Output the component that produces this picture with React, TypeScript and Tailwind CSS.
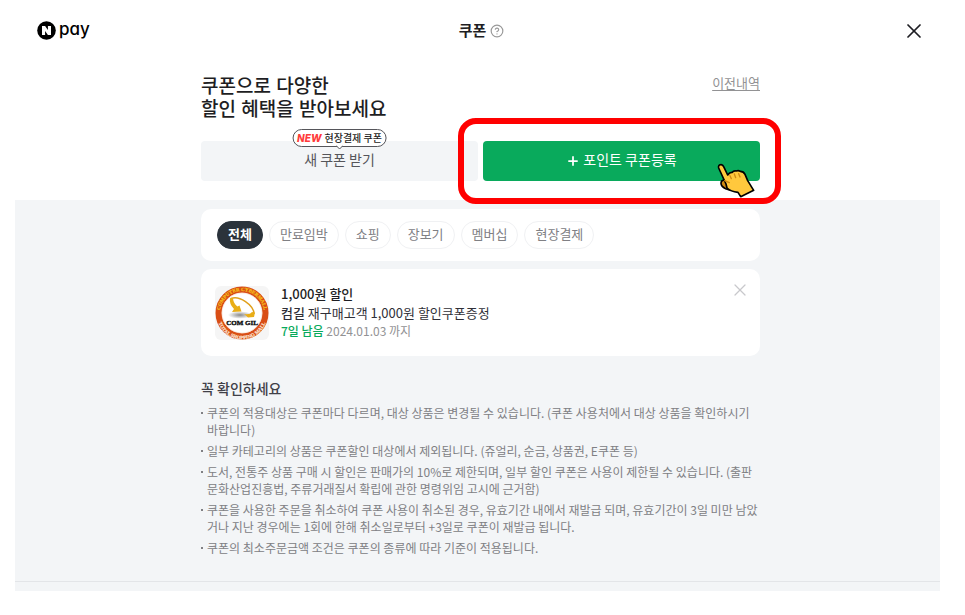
import { CircleHelp, Plus, X } from 'lucide-react';

const filters = ['전체', '만료임박', '쇼핑', '장보기', '멤버십', '현장결제'];

const notices = [
  '쿠폰의 적용대상은 쿠폰마다 다르며, 대상 상품은 변경될 수 있습니다. (쿠폰 사용처에서 대상 상품을 확인하시기 바랍니다)',
  '일부 카테고리의 상품은 쿠폰할인 대상에서 제외됩니다. (쥬얼리, 순금, 상품권, E쿠폰 등)',
  '도서, 전통주 상품 구매 시 할인은 판매가의 10%로 제한되며, 일부 할인 쿠폰은 사용이 제한될 수 있습니다. (출판문화산업진흥법, 주류거래질서 확립에 관한 명령위임 고시에 근거함)',
  '쿠폰을 사용한 주문을 취소하여 쿠폰 사용이 취소된 경우, 유효기간 내에서 재발급 되며, 유효기간이 3일 미만 남았거나 지난 경우에는 1회에 한해 취소일로부터 +3일로 쿠폰이 재발급 됩니다.',
  '쿠폰의 최소주문금액 조건은 쿠폰의 종류에 따라 기준이 적용됩니다.',
];

function PayLogo() {
  return (
    <a href="#" aria-label="N pay" className="flex items-center gap-[3px] text-black">
      <svg width="19" height="19" viewBox="0 0 19 19">
        <circle cx="9.5" cy="9.5" r="9.3" fill="#000" />
        <path d="M5 5h3.1l2.8 4.1V5H14v9h-3.1L8.1 9.9V14H5z" fill="#fff" />
      </svg>
      <span className="pb-[3px] font-[Inter,sans-serif] text-[17px] leading-5 font-medium [font-feature-settings:'cv11']">pay</span>
    </a>
  );
}

function ShopEmblem() {
  return (
    <svg className="size-[54px] shrink-0 rounded-md bg-[#f5f5f5]" viewBox="0 0 54 54" role="img" aria-label="COM GIL">
      <defs>
        <path id="ring-top" d="M5 27a22 22 0 0 1 44 0" />
        <path id="ring-bottom" d="M1.8 28a25.2 25.2 0 0 0 50.4 0" />
        <radialGradient id="shade">
          <stop offset="0" stopColor="#8a8a8a" />
          <stop offset="1" stopColor="#fff" />
        </radialGradient>
      </defs>
      <circle cx="27" cy="27" r="23.4" fill="#fff" stroke="#d94e16" strokeWidth="6.2" />
      <circle cx="27" cy="27" r="20" fill="none" stroke="#f6d9c8" strokeWidth="0.6" />
      <ellipse cx="25" cy="29" rx="12" ry="3.8" fill="url(#shade)" />
      <path d="M16 12.500C24 9 39 19 39 28" fill="none" stroke="#e0a01c" strokeWidth="1.5" />
      <path d="M15 12q-1 6 4 11l-2 3 9.500-.5-2-6-2 1q-4-3-4.500-8z" fill="#e9ae17" />
      <path d="M29 28q6 1 8-2l3 .5-1 4.500-6 .5z" fill="#e9ae17" />
      <text x="27" y="39" textAnchor="middle" className="font-['Liberation_Serif',serif] text-[7px] font-bold" fill="#111" stroke="#111" strokeWidth="0.4">COM GIL</text>
      <text className="font-['Liberation_Serif',serif] text-[5px] font-bold" fill="#f6c21c" stroke="#f6c21c" strokeWidth="0.2">
        <textPath href="#ring-top" startOffset="50%" textAnchor="middle">COMPUTER CYBERMALL</textPath>
      </text>
      <text className="font-['Liberation_Serif',serif] text-[5px] font-bold" fill="#fbe3d3" stroke="#fbe3d3" strokeWidth="0.2">
        <textPath href="#ring-bottom" startOffset="50%" textAnchor="middle">TOTAL SHOPPING MALL</textPath>
      </text>
    </svg>
  );
}

function PointingHand() {
  return (
    <svg className="absolute top-[21px] right-1 h-9 w-10" viewBox="50 62 120 108" aria-hidden="true">
      <g stroke="#000" strokeWidth="5" strokeLinejoin="round" strokeLinecap="round">
        <path d="M76 116q-11 0-11 10t14 16l14 5 8-17z" fill="#cf8a12" />
        <path d="M58 80q-2-9 6-10 6-1 9 6l12 25q6-9 14-8 4-6 12-4 6-3 12 1 10 0 14 9l8 19 18 29-39 19-8-13q-22-2-33-13l-3-12z" fill="#ffc83d" />
      </g>
      <path d="M76 118l14 6M92 103l4 9M105 98l4 11M118 97l4 10" fill="none" stroke="#cf8a12" strokeWidth="4" strokeLinecap="round" />
    </svg>
  );
}

export default function App() {
  return (
    <div className="min-h-screen bg-white pr-[25px] pb-6 pl-[15px] font-['Noto_Sans_CJK_KR',sans-serif] text-[#1e1e23]">
      <header className="grid h-[61px] grid-cols-[1fr_auto_1fr] items-center pr-3.5 pl-[22px]">
        <PayLogo />
        <div className="flex items-center gap-1">
          <h1 className="pb-0.5 text-[15px] leading-5 font-bold">쿠폰</h1>
          <button type="button" aria-label="도움말" className="text-[#999]">
            <CircleHelp size={14} strokeWidth={2} />
          </button>
        </div>
        <button type="button" aria-label="닫기" className="justify-self-end">
          <X size={24} strokeWidth={1.75} />
        </button>
      </header>

      <section className="pb-[19px] pl-[6px]">
        <div className="mx-auto max-w-[559px]">
          <div className="flex items-start justify-between pt-3.5">
            <h2 className="font-['Liberation_Sans','Noto_Sans_CJK_KR',sans-serif] text-[19px] leading-[23px] font-medium">
              쿠폰으로 다양한
              <br />
              할인 혜택을 받아보세요
            </h2>
            <a href="#" className="text-[13px] leading-4 text-[#929294] underline underline-offset-2">이전내역</a>
          </div>
          <div className="mt-5 grid grid-cols-2 gap-[5px] text-sm leading-5">
            <div className="relative">
              <button type="button" className="h-10 w-full rounded bg-[#f3f5f7] pb-1 text-[#55555a]">새 쿠폰 받기</button>
              <span className="absolute -top-3 left-1/2 flex h-[18px] -translate-x-1/2 items-center gap-[3px] rounded-full border border-[#55555a] bg-white px-1 pb-px text-[10px] leading-4 font-medium whitespace-nowrap">
                <em className="font-[Inter,sans-serif] font-extrabold text-[#ff3b3b]">NEW</em>
                현장결제 쿠폰
                <svg className="absolute top-full left-1/2 -mt-px -translate-x-1/2" width="7" height="5" viewBox="0 0 7 5">
                  <path d="M0 .5L3.500 4 7 .5" fill="#fff" stroke="#55555a" />
                  <path d="M1 0h5" stroke="#fff" />
                </svg>
              </span>
            </div>
            <div className="relative">
              <button type="button" className="flex h-10 w-full items-center justify-center gap-[3px] rounded bg-[#09aa5c] text-white">
                <Plus size={14} strokeWidth={3} />
                <span className="pb-1">포인트 쿠폰등록</span>
              </button>
              <div className="pointer-events-none absolute -top-[23px] -right-[21px] -bottom-[23px] -left-[25px] rounded-[18px] border-6 border-[#ff0000]" />
              <PointingHand />
            </div>
          </div>
        </div>
      </section>

      <main className="bg-[#f3f5f7] pt-[9px]">
        <div className="pl-[6px]">
          <div className="mx-auto max-w-[559px]">
            <div className="flex gap-1.5 rounded-[10px] bg-white px-4 py-3">
              {filters.map((name, i) => (
                <button
                  key={name}
                  type="button"
                  className={
                    i === 0
                      ? 'h-7 rounded-full border border-[#2b333b] bg-[#2b333b] px-2.5 pb-0.5 text-[13px] leading-5 font-bold text-white'
                      : 'h-7 rounded-full border border-[#f0f1f3] bg-white px-2.5 pb-0.5 text-[13px] leading-5 text-[#808084]'
                  }
                >
                  {name}
                </button>
              ))}
            </div>

            <article className="mt-2 flex items-center gap-3 rounded-[10px] bg-white px-3.5 py-[15px]">
              <ShopEmblem />
              <div className="flex-1 pb-px text-[13px] leading-[19px]">
                <h3 className="font-medium">1,000원 할인</h3>
                <p className="text-[#303038]"><b className="font-medium">컴길</b> 재구매고객 1,000원 할인쿠폰증정</p>
                <p className="text-xs leading-[18px] text-[#929294]">
                  <span className="font-medium text-[#09aa5c]">7일 남음</span> 2024.01.03 까지
                </p>
              </div>
              <button type="button" aria-label="쿠폰 삭제" className="-mt-1 -mr-1 self-start text-[#c8c8cc]">
                <X size={20} strokeWidth={1.5} />
              </button>
            </article>

            <h2 className="mt-[22px] text-sm leading-5 font-medium text-[#404048]">꼭 확인하세요</h2>
            <ul className="mt-1.5 space-y-1 pb-[25px] text-xs leading-[17px] text-[#808084]">
              {notices.map((text) => (
                <li key={text} className="flex gap-1">
                  <span className="mt-2 size-0.5 shrink-0 bg-[#808084]" />
                  <span>{text}</span>
                </li>
              ))}
            </ul>
          </div>
        </div>
        <footer className="h-2.5 border-t border-[#e3e5e8]" />
      </main>
    </div>
  );
}
